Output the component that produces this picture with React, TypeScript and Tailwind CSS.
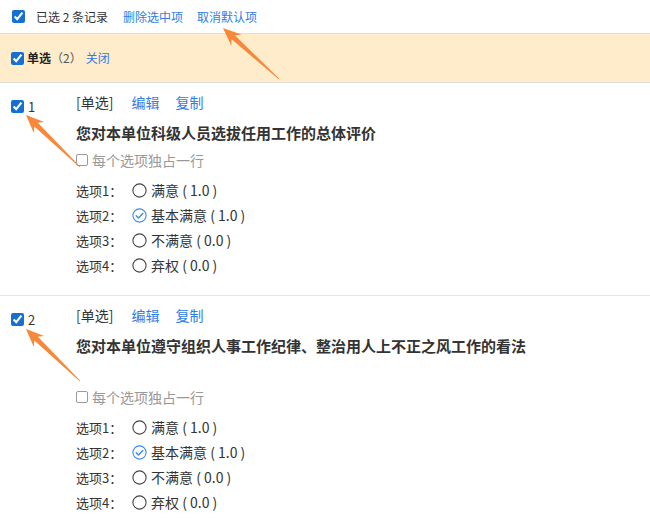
import React from "react";

const font = "font-['Microsoft_YaHei','Noto_Sans_CJK_SC',sans-serif]";

type Pt = [number, number];

// build an arrow polygon from tail to tip
const arrowPoints = (tail: Pt, tip: Pt) => {
  const dx = tip[0] - tail[0];
  const dy = tip[1] - tail[1];
  const L = Math.hypot(dx, dy);
  const ux = dx / L;
  const uy = dy / L;
  const nx = -uy;
  const ny = ux;
  const at = (d: number, w: number): string =>
    `${(tail[0] + ux * d + nx * w).toFixed(1)},${(tail[1] + uy * d + ny * w).toFixed(1)}`;
  return [
    at(0, 0.4),
    at(L - 14, 2.6),
    at(L - 18, 7.5),
    at(L, 0),
    at(L - 18, -7.5),
    at(L - 14, -2.6),
    at(0, -0.4),
  ].join(" ");
};

const Arrows = () => (
  <svg
    className="absolute inset-0 pointer-events-none"
    width="650"
    height="521"
    viewBox="0 0 650 521"
  >
    <polygon points={arrowPoints([279, 79], [223, 28])} fill="#f7883b" />
    <polygon points={arrowPoints([80, 167], [26, 115])} fill="#f7883b" />
    <polygon points={arrowPoints([80, 381], [26, 329])} fill="#f7883b" />
  </svg>
);

const Check = () => (
  <input
    type="checkbox"
    defaultChecked
    className="w-[13px] h-[13px] m-0 accent-[#1670d2] shrink-0"
  />
);

const Radio: React.FC<{ checked?: boolean }> = ({ checked }) =>
  checked ? (
    <svg width="15" height="15" viewBox="0 0 15 15" className="shrink-0">
      <circle cx="7.5" cy="7.5" r="6.6" fill="none" stroke="#3d8ae8" strokeWidth="1.1" />
      <path
        d="M4.2 7.7l2.3 2.3 4.3-4.6"
        fill="none"
        stroke="#3d8ae8"
        strokeWidth="1.4"
        strokeLinecap="round"
        strokeLinejoin="round"
      />
    </svg>
  ) : (
    <svg width="15" height="15" viewBox="0 0 15 15" className="shrink-0">
      <circle cx="7.5" cy="7.5" r="6.6" fill="none" stroke="#444" strokeWidth="1.1" />
    </svg>
  );

interface Option {
  text: string;
  score: string;
  checked?: boolean;
}

const options: Option[] = [
  { text: "满意", score: "1.0" },
  { text: "基本满意", score: "1.0", checked: true },
  { text: "不满意", score: "0.0" },
  { text: "弃权", score: "0.0" },
];

interface QuestionProps {
  no: number;
  title: string;
  extraLine?: boolean;
  last?: boolean;
}

const QuestionBlock: React.FC<QuestionProps> = ({ no, title, extraLine, last }) => (
  <div className={`flex ${last ? "" : "border-b border-[#e6e6e6]"} pb-[17px]`}>
    <div className="w-[76px] shrink-0 pl-[11px] pt-[17px]">
      <div className="flex items-end gap-[4px]">
        <Check />
        <span className="text-[13px] leading-[12px] text-[#333]">{no}</span>
      </div>
    </div>
    <div className="flex-1 pt-[9px]">
      <div className="flex items-center h-[20px] text-[14px] gap-[18px]">
        <span className="text-[#333]">[单选]</span>
        <span className="text-[#2f7de6]">编辑</span>
        <span className="text-[#2f7de6] -ml-[2px]">复制</span>
      </div>
      <div className="mt-[10px] h-[22px] flex items-center text-[15px] font-bold text-[#333]">
        {title}
      </div>
      {extraLine && <div className="h-[24px]" />}
      <div className="mt-[6px] h-[20px] flex items-center gap-[4px] text-[14px] text-[#999]">
        <span className="w-[12px] h-[12px] border border-[#9a9a9a] rounded-[2px] bg-white" />
        <span>每个选项独占一行</span>
      </div>
      <div className="mt-[8px] flex flex-col">
        {options.map((o, i) => (
          <div key={i} className="flex items-center h-[25px] text-[#333]">
            <span className="w-[56px] text-[13px]">选项{i + 1}：</span>
            <Radio checked={o.checked} />
            <span className="ml-[4px] text-[14px]">
              {o.text} ( {o.score} )
            </span>
          </div>
        ))}
      </div>
    </div>
  </div>
);

export default function App() {
  return (
    <div className={`relative w-[650px] h-[521px] overflow-hidden bg-white ${font}`}>
      <div className="h-[33px] flex items-center pl-[12px] text-[12px]">
        <Check />
        <span className="ml-[11px] text-[#333]">已选 2 条记录</span>
        <span className="ml-[15px] text-[#2f7de6]">删除选中项</span>
        <span className="ml-[14px] text-[#2f7de6]">取消默认项</span>
      </div>
      <div className="h-[50px] flex items-center pl-[11px] bg-[#feecca] border-y border-[#dedede] text-[12px]">
        <Check />
        <span className="ml-[3px] font-bold text-[#222]">单选</span>
        <span className="text-[#555]">（2）</span>
        <span className="ml-[4px] text-[#2f7de6]">关闭</span>
      </div>
      <QuestionBlock no={1} title="您对本单位科级人员选拔任用工作的总体评价" />
      <QuestionBlock
        no={2}
        title="您对本单位遵守组织人事工作纪律、整治用人上不正之风工作的看法"
        extraLine
        last
      />
      <Arrows />
    </div>
  );
}
